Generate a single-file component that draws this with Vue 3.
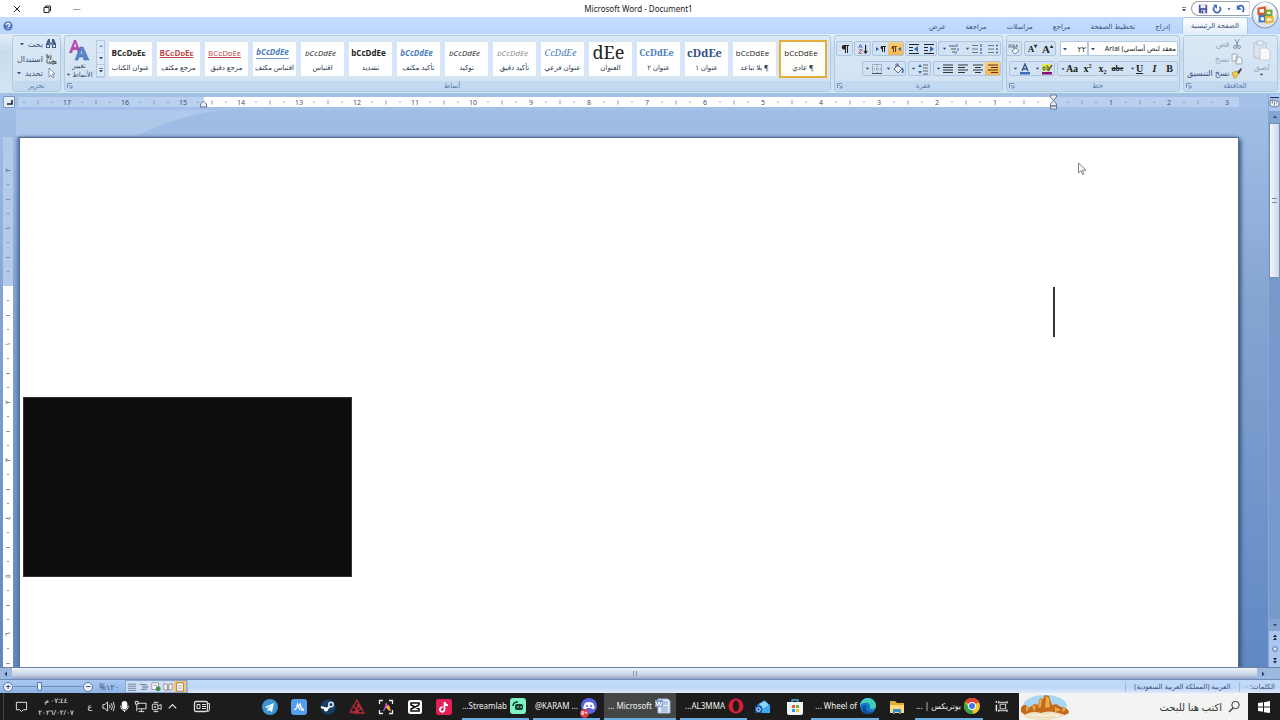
<script setup>
import { h } from 'vue'

const icons = {
  close: ['0 0 12 12', '<path d="M3 3l6 6M9 3l-6 6" stroke="#222" fill="none"/>'],
  restore: ['0 0 12 12', '<path d="M3 4.500h5v5H3zM4.500 4V3H9.500v5H8.500" stroke="#222" fill="none"/>'],
  minimize: ['0 0 12 12', '<path d="M2.500 6.500h7" stroke="#999" fill="none"/>'],
  save: ['0 0 12 12', '<path d="M1 1h10v10H2l-1-1z" fill="#4a4fa8"/><path d="M3 1h6v4H3z" fill="#e8ecfa"/><path d="M4 7h5v4H4z" fill="#c5cbe8"/><path d="M5 8h1v3H5z" fill="#223"/>'],
  redo: ['0 0 12 12', '<path d="M3 3.500a4 4 0 1 0 6 0" fill="none" stroke="#3d67b8" stroke-width="2"/><path d="M1 1h5v5z" fill="#3d67b8"/>'],
  undo: ['0 0 12 12', '<path d="M3 3c4-3 8 1 5 7" fill="none" stroke="#3d67b8" stroke-width="2"/><path d="M1 1v6h6z" fill="#3d67b8"/>'],
  down: ['0 0 8 8', '<path d="M2 3h4L4 5.500z" fill="#334a78"/>'],
  up: ['0 0 8 8', '<path d="M2 5h4L4 2.500z" fill="#334a78"/>'],
  left: ['0 0 8 8', '<path d="M5 1.500v5L2.500 4z" fill="#243c66"/>'],
  right: ['0 0 8 8', '<path d="M3 1.500v5L5.500 4z" fill="#243c66"/>'],
  more: ['0 0 8 8', '<path d="M2 2.500h4M2.500 4.500h3L4 6z" fill="#334" stroke="#334" stroke-width=".6"/>'],
  help: ['0 0 10 10', '<circle cx="5" cy="5" r="4.500" fill="#3c64b4"/><circle cx="5" cy="5" r="3.700" fill="#5b80c8"/><path d="M3.400 4q0-1.700 1.700-1.700T6.700 4Q6.700 5 5 5.800M5 7v1" stroke="#fff" stroke-width="1.200" fill="none"/>'],
  office: ['0 0 26 26', '<circle cx="13" cy="13" r="12" fill="#dde3ec" stroke="#8b98ae"/><circle cx="13" cy="11" r="10" fill="#f7f8fb"/><path d="M7 7l6-1v6H7z" fill="none" stroke="#e0562a" stroke-width="2"/><path d="M14 9h5v4h-5z" fill="none" stroke="#74aa3c" stroke-width="2"/><path d="M8 14h5v5H8z" fill="none" stroke="#3f78c0" stroke-width="2"/><path d="M14 15h6v4l-6 1z" fill="none" stroke="#eeb52c" stroke-width="2"/>'],
  find: ['0 0 12 12', '<path d="M1 10V6l2-5h2v9zM7 10V1h2l2 5v4z" fill="#415c8a"/><path d="M4 4h4v3H4z" fill="#6c86b0"/><path d="M2 7h2v2H2zM8 7h2v2H8z" fill="#d7e4f6"/>'],
  replace: ['0 0 12 12', '<path d="M2 1v4h2V3H2M6 2v3l-1 2" stroke="#555" fill="none"/><path d="M2 6v4h3M4 8l2 2-2 1" stroke="#4a7a55" fill="none"/><path d="M7 8h2v3H7zM11.500 8.500H10v2h1.500" stroke="#445" fill="none"/>'],
  select: ['0 0 12 12', '<path d="M4 1v9l2-2 2 3 1-1-1.500-3H10z" fill="#fff" stroke="#667c9e" stroke-width=".8"/>'],
  styles: ['0 0 22 22', '<path d="M1 14L6 1h2l5 13h-3L9 11H5l-1 3zM6 8h2.500L7 4z" fill="#b94cae"/><path d="M7 21l5-13h3l5 11 1 2h-5l-1-3h-4l-1 3zM12 15h3l-2-5z" fill="#5788cc" stroke="#3763a5" stroke-width=".5"/>'],
  pilcrow: ['0 0 12 12', '<path d="M10 2H5a2 2 0 0 0 0 4.500h1V10h1V3h1v7h1V3h1z" fill="#222"/>'],
  sort: ['0 0 14 14', '<path d="M2 6l1.500-4h1L6 6M3 4.500h2" stroke="#4966ac" fill="none"/><path d="M2 8h4l-4 4h4" stroke="#b14050" fill="none"/><path d="M10 2v9M8 9l2 3 2-3" stroke="#222" fill="none" stroke-width="1.300"/>'],
  ltr: ['0 0 12 12', '<path d="M1 4v4l3-2z" fill="#345da0"/><path d="M11 3H7a1.500 1.500 0 0 0 0 3v3h1V4h1v5h1V4h1z" fill="#222"/>'],
  rtl: ['0 0 12 12', '<path d="M11 4v4L8 6z" fill="#345da0"/><path d="M7 3H3a1.500 1.500 0 0 0 0 3v3h1V4h1v5h1V4h1z" fill="#6a4210"/>'],
  outdent: ['0 0 12 12', '<path d="M1 1.500h10M1 4.500h4M1 7.500h4M1 10.500h10" stroke="#222"/><path d="M10 3v6L6 6z" fill="#3f68ac"/>'],
  indent: ['0 0 12 12', '<path d="M1 1.500h10M1 4.500h4M1 7.500h4M1 10.500h10" stroke="#222"/><path d="M7 3v6l4-3z" fill="#3f68ac"/>'],
  multi: ['0 0 12 12', '<path d="M1 3h7M3 6h5M4 9h3" stroke="#555"/><path d="M9 1v3M10 5v3M8 8v3" stroke="#3f6cb2"/>'],
  numbered: ['0 0 12 12', '<path d="M1 2.500h6M1 6h6M1 9.500h6" stroke="#777"/><path d="M10 1v3M10 5v3M10 9v2" stroke="#3f6cb2" stroke-width="1.300"/>'],
  bullets: ['0 0 12 12', '<path d="M1 2.500h6M1 6h6M1 9.500h6" stroke="#777"/><path d="M9 2.500h2M9 6h2M9 9.500h2" stroke="#3f6cb2" stroke-width="1.600"/>'],
  borders: ['0 0 12 12', '<path d="M1.500 1.500h9v9h-9zM6 1v10M1 6h10" fill="none" stroke="#7d8798" stroke-dasharray="1 1"/><path d="M1 10.500h10" stroke="#555"/>'],
  bucket: ['0 0 12 12', '<path d="M2 6l4-4 4 4-4 4z" fill="#e9eef8" stroke="#5c6b85"/><path d="M4 4V1h2v3" fill="none" stroke="#5c6b85"/><path d="M10 5q2 3 0 5" stroke="#3d6fc0" fill="none" stroke-width="1.500"/>'],
  spacing: ['0 0 12 12', '<path d="M6 2h5M6 5h5M6 8h5M6 11h5" stroke="#666"/><path d="M1 4l2-3 2 3zM1 8l2 3 2-3z" fill="#3f6cb2"/>'],
  justify: ['0 0 12 12', '<path d="M1 2h10M1 4.500h10M1 7h10M1 9.500h10" stroke="#333" stroke-width="1.200"/>'],
  alignl: ['0 0 12 12', '<path d="M1 2h10M1 4.500h7M1 7h10M1 9.500h7" stroke="#333" stroke-width="1.200"/>'],
  center: ['0 0 12 12', '<path d="M1 2h10M3 4.500h6M1 7h10M3 9.500h6" stroke="#333" stroke-width="1.200"/>'],
  alignr: ['0 0 12 12', '<path d="M1 2h10M4 4.500h7M1 7h10M4 9.500h7" stroke="#5a3508" stroke-width="1.200"/>'],
  clear: ['0 0 12 12', '<path d="M1 5V2h2v3M5 1v4h2V3H5M10 2H8.500v2H10" fill="none" stroke="#667" stroke-width=".8"/><path d="M4 8l4-3 3 3-4 3z" fill="#fff" stroke="#7b88a2"/>'],
  fontcolor: ['0 0 12 12', '<path d="M3 8l3-7 3 7M4 6h4" fill="none" stroke="#34568f" stroke-width="1.400"/><path d="M1 9h10v2.500H1z" fill="#3c6fb5"/>'],
  marker: ['0 0 12 12', '<path d="M1 1h8v7H1z" fill="#e8ee42"/><path d="M2 7V4h2v3zM6 2v5h2V4H6" fill="none" stroke="#444" stroke-width=".8"/><path d="M7 8l4-6" stroke="#6b6034" stroke-width="1.500"/><path d="M1 9h10v2.500H1z" fill="#85107c"/>'],
  scissors: ['0 0 12 12', '<path d="M4 1l3 7M8 1L5 8" stroke="#8794ac" fill="none"/><circle cx="4" cy="9" r="1.500" fill="none" stroke="#8794ac"/><circle cx="8" cy="9" r="1.500" fill="none" stroke="#8794ac"/>'],
  copy: ['0 0 12 12', '<path d="M1 1h5v7H1zM5 4h4l2 2v5H5z" fill="#f0f3f8" stroke="#a3acbc"/>'],
  brush: ['0 0 12 12', '<path d="M1 6l4-2 3 3-3 4H3z" fill="#eecb4c" stroke="#a5882c" stroke-width=".6"/><path d="M6 5l4-4 1 1-3 5z" fill="#4e463c"/>'],
  paste: ['0 0 20 22', '<path d="M2 3h12v15H2z" fill="#dce5ef" stroke="#b5c1d0"/><path d="M5 1h6v4H5z" fill="#edf1f6" stroke="#b5c1d0"/><path d="M8 8h7l3 3v9H8z" fill="#f8fafd" stroke="#c2cbd8"/>'],
  launcher: ['0 0 8 8', '<path d="M1.500 6V1.500H6M3 3l3 3M6 3.500V6H3.500" stroke="#6e89b2" fill="none" stroke-width=".9"/>'],
  vprint: ['0 0 12 12', '<path d="M2 1h8v10H2z" fill="#fff" stroke="#8b6f3a"/><path d="M4 4h4M4 6h4M4 8h4" stroke="#888" stroke-width=".7"/>'],
  vread: ['0 0 12 12', '<path d="M1 2l4 1v7L1 9zM11 2L7 3v7l4-1z" fill="#fff" stroke="#7a7f8c"/><path d="M6 3v7" stroke="#c58a3d"/>'],
  vweb: ['0 0 12 12', '<path d="M1 1h8v8H1z" fill="#fff" stroke="#8792a8"/><path d="M3 4h4" stroke="#888"/><circle cx="8.500" cy="8" r="3" fill="#459055"/>'],
  voutline: ['0 0 12 12', '<path d="M1 3h8M4 5h7M4 7h7M2 9h7" stroke="#66738b"/>'],
  vdraft: ['0 0 12 12', '<path d="M1 2.500h10M1 5h10M1 7.500h10M1 10h10" stroke="#66738b"/>'],
  notify: ['0 0 14 14', '<path d="M1.500 2.500h11v8H9l-2 2-2-2H1.500z" fill="none" stroke="#eee"/>'],
  speaker: ['0 0 14 14', '<path d="M1 5h2l3-3v10L3 9H1z" fill="none" stroke="#eee"/><path d="M8 5q1.500 2 0 4M10 3.500q2.500 3.500 0 7M12 2q3 5 0 10" fill="none" stroke="#eee"/>'],
  mic: ['0 0 14 14', '<rect x="4" y="1" width="6" height="9" rx="3" fill="#fff"/><path d="M3 6q0 5 4 5t4-5M7 11v2" fill="none" stroke="#fff"/>'],
  network: ['0 0 14 14', '<path d="M4 3.500h9v6H4M8 10v2M5 12.500h6M1.500 1.500h3v3h-3zM3 5v7" fill="none" stroke="#eee"/>'],
  device: ['0 0 14 14', '<rect x="2.500" y="4.500" width="6" height="6" rx="1" fill="none" stroke="#eee"/><path d="M9 6l3-1v5L9 9M4 2.500h5M4 12.500h5" fill="none" stroke="#eee"/><circle cx="5.500" cy="7.500" r="1" fill="#eee"/>'],
  chevron: ['0 0 14 14', '<path d="M3 9l4-4 4 4" fill="none" stroke="#eee" stroke-width="1.200"/>'],
  news: ['0 0 18 14', '<rect x="1.500" y="2" width="13" height="10" rx="1.500" fill="none" stroke="#ddd" stroke-width="1.300"/><path d="M15 4h1.500v6q0 2-2 2M4 5h3v4H4zM9 5h4M9 7h4M9 9h4" fill="none" stroke="#ddd"/>'],
  telegram: ['0 0 16 16', '<circle cx="8" cy="8" r="8" fill="#3b95d5"/><path d="M3 8l9-4-2 9-3-2-1.500 1.500V10L10 6 5 9z" fill="#fff"/>'],
  wave: ['0 0 16 16', '<rect width="16" height="16" rx="3" fill="#559df0"/><path d="M3 11q3-1 3.500-5.500L9 11M8 6.500l1-1.500q1 5 4 6h-3" stroke="#fff" stroke-width="1.300" fill="none"/>'],
  steam: ['0 0 16 16', '<circle cx="8" cy="8" r="7.500" fill="#173e68"/><path d="M1 8l6 2 4-4" stroke="#fff" stroke-width="2" fill="none"/><circle cx="11" cy="5.500" r="3" fill="#dce8f4"/><circle cx="11" cy="5.500" r="1.500" fill="#173e68"/><circle cx="6" cy="10.500" r="2" fill="#fff"/>'],
  redtri: ['0 0 16 16', '<path d="M8 1l2 4-4 8H1zM8 1l7 13H9l-1-4M5 7l5 7H4l8-4-4-5" fill="none" stroke="#b52a35" stroke-width="1.300"/>'],
  capture: ['0 0 16 16', '<path d="M1.500 5V1.500H5M11 1.500h3.500V5M1.500 11v3.500H5M11 14.500h3.500V11" fill="none" stroke="#eee" stroke-width="1.300"/><path d="M4 12q2-1 4-8l1 3-3 5z" fill="#377ce5"/><path d="M8 3l3 5-3 1-2 3z" fill="#dd45bf"/><path d="M8 8l3-2 2 6q-3 0-5-4z" fill="#f5b437"/>'],
  capcut: ['0 0 16 16', '<rect x="1" y="1" width="14" height="14" rx="2.500" fill="#fff"/><path d="M12 6V4H4v2l8 4v2H4v-2l8-4" fill="none" stroke="#111" stroke-width="1.600"/>'],
  tiktok: ['0 0 16 16', '<rect width="16" height="16" rx="2" fill="#e41f58"/><path d="M8.500 3v7.500a2.300 2.300 0 1 1-2-2.300M8.500 3q.5 3 3.500 3.300" fill="none" stroke="#fff" stroke-width="1.800"/>'],
  streamlabs: ['0 0 16 16', '<rect width="16" height="16" rx="3" fill="#7ff2c3"/><path d="M3 8q0-4 5-4" stroke="#123c30" stroke-width="1.500" fill="none"/><rect x="5" y="6" width="8" height="6" rx="2" fill="#123c30"/><path d="M8 8v2M11 8v2" stroke="#7ff2c3"/>'],
  discord: ['0 0 16 16', '<circle cx="8" cy="8" r="8" fill="#5864e8"/><path d="M4 5q4-2 8 0l2 5q-2 2-3 1l-1-1H6l-1 1q-1 1-3-1z" fill="#fff"/><circle cx="6" cy="8" r="1" fill="#5864e8"/><circle cx="10" cy="8" r="1" fill="#5864e8"/>'],
  word: ['0 0 16 16', '<path d="M5 1h8l2 2v12H3V1z" fill="#e7effa" stroke="#9db6da"/><path d="M8 4h5M8 6h5M6 9h7M6 11h7M6 13h7" stroke="#5d87c5" stroke-width=".8"/><path d="M0 2h8v7H0z" fill="#7f9fd2"/><path d="M1 4l1.500 4L4 4l1.500 4L7 4" stroke="#fff" fill="none"/>'],
  opera: ['0 0 16 16', '<ellipse cx="8" cy="8" rx="7.500" ry="7.500" fill="#d91d35"/><ellipse cx="8" cy="8" rx="3.200" ry="5.500" fill="#1b1c1c"/>'],
  outlook: ['0 0 16 16', '<path d="M2 6l7-5 6 5v8H3z" fill="#1d7fda"/><path d="M4 5l6-3 4 4-6 4z" fill="#8bd4fa"/><path d="M7 11l8-5v8H3z" fill="#3faaf0"/><rect y="7" width="7" height="7" rx="1" fill="#1559ad"/><circle cx="3.500" cy="10.500" r="1.800" fill="none" stroke="#fff"/>'],
  store: ['0 0 16 16', '<path d="M5 4V1h6v3" fill="none" stroke="#4bb1e2" stroke-width="1.300"/><path d="M0 3h16v11q0 2-2 2H2q-2 0-2-2z" fill="#f2f5f7"/><path d="M5 6h3v3H5z" fill="#e65b3a"/><path d="M9 6h3v3H9z" fill="#79b940"/><path d="M5 10h3v3H5z" fill="#2a9fe0"/><path d="M9 10h3v3H9z" fill="#f3bd31"/>'],
  edge: ['0 0 16 16', '<circle cx="8" cy="8" r="8" fill="#1976cc"/><path d="M0 8a8 8 0 0 1 16 0q0 3-4 3-3 0-2-3-1-4-5-3-4 0-5 3z" fill="#3ed0b0"/><path d="M2 3a8 8 0 0 1 9-2q-8 0-11 7 0-3 2-5z" fill="#46cbe8"/><path d="M6 7q-2 6 5 7 3 0 4-2-2 4-7 4-6-1-6-6 1-3 4-3z" fill="#0d5193"/>'],
  folder: ['0 0 16 16', '<path d="M1 2h5l2 2h7v10H1z" fill="#e5ad34"/><path d="M1 6h14v8H1z" fill="#ffd978"/><path d="M4 10h8v5h-2v-2H6v2H4z" fill="#378fcd"/>'],
  chrome: ['0 0 16 16', '<circle cx="8" cy="8" r="8" fill="#f4c52c"/><path d="M8 8L1 4a8 8 0 0 1 14 0z" fill="#e24132"/><path d="M8 8l1 8A8 8 0 0 1 1 4l4 6z" fill="#35a24c"/><circle cx="8" cy="8" r="4" fill="#fff"/><circle cx="8" cy="8" r="3" fill="#3b7be8"/>'],
  taskview: ['0 0 14 14', '<path d="M5.500 4.500h6v5h-6zM4 2.500h9M4 11.500h9M13 1v3M13 10v3M4 1v3M4 10v3" fill="none" stroke="#eee"/><path d="M1.500 1v2M1.500 5v7" stroke="#eee" stroke-width="1.500"/>'],
  windows: ['0 0 12 12', '<path d="M0 2l5-.7v4.200H0zM6 1.200L12 0v5.500H6zM0 6.500h5v4.200L0 10zM6 6.500h6V12l-6-.8z" fill="#fff"/>'],
  search: ['0 0 14 14', '<circle cx="8.500" cy="5" r="3.700" fill="none" stroke="#333"/><path d="M6 8l-4 4" stroke="#333" stroke-width="1.200"/>'],
  desert: ['0 0 50 26', '<ellipse cx="26" cy="12" rx="22" ry="11" fill="#a9d7ef"/><path d="M2 18q-1-8 5-7l3 3 5-4 4 1 2-7 3 1 2-4 4 1 3 9 4-1 5 3q8 1 8 6l-8 4H9z" fill="#c26a1c"/><path d="M21 5l2-1-1 9-3 1zM27 2l3 2 1 9-5 1zM7 12l3 3-3 3zM13 11l4 1-2 6zM36 13l6 3-6 2zM44 13l3 3-4 2z" fill="#eca84b"/><path d="M4 22q8-6 18-3 8-4 24 2-6 5-22 5-15 0-20-4z" fill="#f0e1c2"/><path d="M12 22q6-3 14 0 8-3 14 0" fill="none" stroke="#fff8e8"/>'],
  cursor: ['0 0 10 14', '<path d="M1.500 1v10l2.500-2.300 1.700 3.800 1.300-.7-1.600-3.600H9z" fill="#fff" stroke="#666" stroke-width=".8"/>'],
  ruleTab: ['0 0 12 12', '<path d="M.5.500h11v11H.5z" fill="#e4eefb" stroke="#7c9ac8"/><path d="M9 4v4H4" fill="none" stroke="#222" stroke-width="1.600"/>'],
  ball: ['0 0 8 8', '<circle cx="4" cy="4" r="2.300" fill="#dce8f8" stroke="#55729f"/>'],
  rulerview: ['0 0 10 10', '<path d="M1 3h4l4 1v4L5 9 1 8z" fill="#f3f5f8" stroke="#66758c" stroke-width=".8"/><path d="M3 3v3M5 4v4M7 4v2" stroke="#66758c" stroke-width=".8"/><path d="M1 .5h8" stroke="#223a63"/>'],
  dblup: ['0 0 8 8', '<path d="M2 4l2-2.500L6 4zM2 7l2-2.500L6 7z" fill="#222"/>'],
  dbldown: ['0 0 8 8', '<path d="M2 1l2 2.500L6 1zM2 4l2 2.500L6 4z" fill="#222"/>'],
}
const Icon = (p) => h('svg', { viewBox: icons[p.n][0], width: p.w || p.s, height: p.s, 'aria-hidden': 'true', innerHTML: icons[p.n][1] })
Icon.props = ['n', 's', 'w']

const tabs = ['عرض', 'مراجعة', 'مراسلات', 'مراجع', 'تخطيط الصفحة', 'إدراج']
const styleCards = [
  ['BCᴄDᴅEᴇ', 'عنوان الكتاب', 'black bold'],
  ['BCᴄDᴅEᴇ', 'مرجع مكثف', 'red bold under'],
  ['BCᴄDᴅEᴇ', 'مرجع دقيق', 'red under'],
  ['bCcDdEe', 'اقتباس مكثف', 'blue bold italic line'],
  ['bCcDdEe', 'اقتباس', 'black italic'],
  ['bCcDdEe', 'تشديد', 'black bold'],
  ['bCcDdEe', 'تأكيد مكثف', 'blue bold italic'],
  ['bCcDdEe', 'توكيد', 'black italic'],
  ['bCcDdEe', 'تأكيد دقيق', 'gray italic'],
  ['CcDdEe', 'عنوان فرعي', 'blue serif italic mid'],
  ['dEe', 'العنوان', 'black serif title'],
  ['CcDdEe', 'عنوان ٢', 'blue serif bold mid'],
  ['cDdEe', 'عنوان ١', 'navy serif bold large'],
  ['bCcDdEe', '¶ بلا تباعد', 'black'],
  ['bCcDdEe', '¶ عادي', 'black'],
]
const paraRows = [
  [[['pilcrow']], [['sort']], [['ltr'], ['rtl', 0, 1]], [['outdent'], ['indent']], [['multi', 1], ['numbered', 1], ['bullets']]],
  [[['borders', 1], ['bucket', 1]], [['spacing', 1]], [['justify', 1], ['alignl'], ['center'], ['alignr', 0, 1]]],
]
const rulerNumbers = Array.from({ length: 21 }, (_, i) => i - 3)
const rulerX = (n) => 1035 - n * 58
const vNumbers = Array.from({ length: 9 }, (_, i) => i - 2)
const arabic = '٠١٢٣٤٥٦'
const views = ['vdraft', 'voutline', 'vweb', 'vread', 'vprint']
const tray = ['speaker', 'mic', 'network', 'device', 'chevron']
const pinned = ['telegram', 'wave', 'steam', 'redtri', 'capture', 'capcut', 'tiktok']
</script>

<template>
  <div class="window">
    <header class="titlebar">
      <div class="winctl">
        <button aria-label="إغلاق"><Icon n="close" s="12" /></button>
        <button aria-label="استعادة"><Icon n="restore" s="12" /></button>
        <button aria-label="تصغير"><Icon n="minimize" s="12" /></button>
      </div>
      <h1>Microsoft Word - Document1</h1>
      <div class="quick">
        <button aria-label="تخصيص"><Icon n="more" s="8" /></button>
        <div class="pill">
          <button aria-label="حفظ"><Icon n="save" s="10" /></button>
          <button aria-label="إعادة"><Icon n="redo" s="10" /></button>
          <Icon n="down" s="6" />
          <button aria-label="تراجع"><Icon n="undo" s="10" /></button>
        </div>
      </div>
      <button class="office" aria-label="زر أوفيس"><Icon n="office" s="28" /></button>
    </header>

    <nav class="tabs">
      <button class="help" aria-label="تعليمات"><Icon n="help" s="10" /></button>
      <button v-for="t in tabs" :key="t" class="tab" dir="rtl">{{ t }}</button>
      <button class="tab active" dir="rtl">الصفحة الرئيسية</button>
    </nav>

    <section class="ribbon">
      <div class="group editing">
        <div class="body rows">
          <button dir="rtl"><Icon n="find" s="12" />بحث<Icon n="down" s="8" /></button>
          <button dir="rtl"><Icon n="replace" s="12" />استبدال</button>
          <button dir="rtl"><Icon n="select" s="12" />تحديد<Icon n="down" s="8" /></button>
        </div>
        <div class="caption"><span>تحرير</span></div>
      </div>

      <div class="group styles">
        <div class="body gallery">
          <button class="change" dir="rtl"><Icon n="styles" s="22" /><span>تغيير</span><span>الأنماط<Icon n="down" s="7" /></span></button>
          <div class="scroller">
            <button aria-label="أعلى" class="dim"><Icon n="up" s="8" /></button>
            <button aria-label="أسفل"><Icon n="down" s="8" /></button>
            <button aria-label="المزيد"><Icon n="more" s="8" /></button>
          </div>
          <div class="cards">
            <button v-for="(c, i) in styleCards" :key="i" class="card" :class="{ selected: i === 14 }">
              <span class="sample" :class="c[2]"><span>{{ c[0] }}</span></span>
              <span class="name" dir="rtl">{{ c[1] }}</span>
            </button>
          </div>
        </div>
        <div class="caption"><button aria-label="أنماط"><Icon n="launcher" s="8" /></button><span>أنماط</span></div>
      </div>

      <div class="group paragraph">
        <div class="body tools">
          <div v-for="(row, r) in paraRows" :key="r" class="toolrow">
            <div v-for="(set, s) in row" :key="s" class="set">
              <button v-for="b in set" :key="b[0]" :class="{ on: b[2], wide: b[1] }" :aria-label="b[0]">
                <Icon v-if="b[1]" n="down" s="7" /><Icon :n="b[0]" s="12" />
              </button>
            </div>
          </div>
        </div>
        <div class="caption"><button aria-label="فقرة"><Icon n="launcher" s="8" /></button><span>فقرة</span></div>
      </div>

      <div class="group font">
        <div class="body tools">
          <div class="toolrow">
            <div class="set"><button aria-label="مسح التنسيق"><Icon n="clear" s="12" /></button></div>
            <div class="set"><button class="serifb small">A<sup>▾</sup></button><button class="serifb">A<sup>▴</sup></button></div>
            <div class="combos">
              <label class="combo size"><Icon n="down" s="8" /><select aria-label="حجم الخط" dir="rtl"><option>٢٢</option></select></label>
              <label class="combo face"><Icon n="down" s="8" /><select aria-label="الخط" dir="rtl"><option>معقد لنص أساسي) Arial</option></select></label>
            </div>
          </div>
          <div class="toolrow">
            <div class="set">
              <button class="wide" aria-label="لون الخط"><Icon n="down" s="7" /><Icon n="fontcolor" s="12" /></button>
              <button class="wide" aria-label="تمييز"><Icon n="down" s="7" /><Icon n="marker" s="12" /></button>
            </div>
            <div class="set letters">
              <button class="wide"><Icon n="down" s="6" />Aa</button>
              <button>x<sup>2</sup></button>
              <button>x<sub>2</sub></button>
              <button><s>abc</s></button>
              <button class="wide"><Icon n="down" s="7" /><u>U</u></button>
              <button><i>I</i></button>
              <button>B</button>
            </div>
          </div>
        </div>
        <div class="caption"><button aria-label="خط"><Icon n="launcher" s="8" /></button><span>خط</span></div>
      </div>

      <div class="group clipboard">
        <div class="body clip">
          <div class="rows">
            <button dir="rtl" class="off"><Icon n="scissors" s="12" />قص</button>
            <button dir="rtl" class="off"><Icon n="copy" s="12" />نسخ</button>
            <button dir="rtl"><Icon n="brush" s="12" />نسخ التنسيق</button>
          </div>
          <button class="pastebtn off"><Icon n="paste" s="22" w="20" />لصق<Icon n="down" s="7" /></button>
        </div>
        <div class="caption"><button aria-label="الحافظة"><Icon n="launcher" s="8" /></button><span>الحافظة</span></div>
      </div>
    </section>

    <div class="workspace">
      <div class="desk">
        <div class="hruler">
          <button class="tabstop" aria-label="علامة جدولة"><Icon n="ruleTab" s="12" /></button>
          <div class="band">
            <svg width="1221" height="16">
              <rect x="0" y="3" width="1221" height="10" fill="#b9d0ef" />
              <rect x="186" y="3" width="850" height="10" fill="#fff" />
              <g v-for="n in rulerNumbers" :key="n">
                <text v-if="n" :x="rulerX(n)" y="11" text-anchor="middle">{{ Math.abs(n) }}</text>
                <path :d="`M${rulerX(n) - 15} 7.500v1.500M${rulerX(n) - 29} 6.500v4M${rulerX(n) - 43} 7.500v1.500`" stroke="#8391a8" />
              </g>
              <path d="M182.500 13v-3l3-3 3 3v3z" fill="#e9eef5" stroke="#68788f" />
              <path d="M1032.500 1h6v2l-3 3.500-3-3.500zM1032.500 12v-2l3-3.500 3 3.500v2zM1032.500 12h6v3h-6z" fill="#e9eef5" stroke="#68788f" />
            </svg>
          </div>
        </div>
        <div class="canvas">
          <svg class="arc" width="220" height="26"><path d="M0 0h204Q165 5 120 26H0z" fill="#b9d0ef" opacity=".6" /></svg>
          <div class="vruler">
            <svg width="10" height="532">
              <rect width="10" height="149" fill="#b2cbea" />
              <rect y="149" width="10" height="383" fill="#fff" />
              <g v-for="n in vNumbers" :key="n">
                <text v-if="n" :transform="`translate(7 ${149 + n * 58}) rotate(-90)`" text-anchor="middle">{{ arabic[Math.abs(n)] }}</text>
                <path :d="`M4 ${163.5 + n * 58}h2M3 ${178.5 + n * 58}h4M4 ${192.5 + n * 58}h2`" stroke="#8592a5" />
              </g>
            </svg>
          </div>
          <main class="page">
            <div class="blackout"></div>
            <span class="caret"></span>
            <Icon class="pointer" n="cursor" s="14" w="10" />
          </main>
        </div>
      </div>
      <div class="vscroll">
        <button class="rulerbtn" aria-label="المسطرة"><Icon n="rulerview" s="11" /></button>
        <button class="arrow" aria-label="أعلى"><Icon n="up" s="8" /></button>
        <div class="vtrack"><div class="vthumb"><i></i></div></div>
        <button class="arrow" aria-label="أسفل"><Icon n="down" s="8" /></button>
        <button aria-label="السابق"><Icon n="dblup" s="8" /></button>
        <button aria-label="استعراض"><Icon n="ball" s="8" /></button>
        <button aria-label="التالي"><Icon n="dbldown" s="8" /></button>
      </div>
    </div>

    <div class="hscroll">
      <button aria-label="يسار"><Icon n="left" s="8" /></button>
      <div class="hthumb"><i></i></div>
      <button aria-label="يمين"><Icon n="right" s="8" /></button>
    </div>

    <footer class="status">
      <div class="zoombar">
        <button class="round" aria-label="تكبير">+</button>
        <input type="range" aria-label="التكبير" min="0" max="100" value="36" />
        <button class="round" aria-label="تصغير">−</button>
        <span class="pct">%١٢٠</span>
        <div class="views">
          <button v-for="v in views" :key="v" :class="{ on: v === 'vprint' }" :aria-label="v"><Icon :n="v" s="10" /></button>
        </div>
      </div>
      <span class="lang" dir="rtl">العربية (المملكة العربية السعودية)</span>
      <span class="words" dir="rtl">الكلمات: ٠</span>
    </footer>

    <div class="taskbar">
      <button class="notice" aria-label="الإشعارات"><Icon n="notify" s="13" /></button>
      <div class="clock"><span dir="rtl">٠٧:٤٤ م</span><span>٢٠٢٦/٠٢/٠٧</span></div>
      <span class="kbd">ع</span>
      <button v-for="t in tray" :key="t" class="traybtn" :aria-label="t"><Icon :n="t" s="13" /></button>
      <button class="newsbtn" aria-label="الأخبار"><Icon n="news" s="15" w="18" /></button>
      <div class="apps">
        <div class="pins">
          <button v-for="p in pinned" :key="p" class="pin" :aria-label="p"><Icon :n="p" s="16" /></button>
        </div>
        <button class="app"><span>...Streamlab</span><Icon n="streamlabs" s="16" /></button>
        <button class="app"><span>@KARAM ...</span><Icon n="discord" s="16" /><b class="badge">9+</b></button>
        <button class="app current"><span>... Microsoft</span><Icon n="word" s="16" /></button>
        <button class="app"><span>...AL3MMA</span><Icon n="opera" s="16" /></button>
      </div>
      <button class="pin mid" aria-label="Outlook"><Icon n="outlook" s="16" /></button>
      <button class="pin mid" aria-label="Store"><Icon n="store" s="16" /></button>
      <button class="app"><span>... Wheel of</span><Icon n="edge" s="16" /></button>
      <button class="pin big" aria-label="الملفات"><Icon n="folder" s="16" /></button>
      <button class="app"><span dir="rtl">بوتريكس | ...</span><Icon n="chrome" s="16" /></button>
      <button class="pin big" aria-label="عرض المهام"><Icon n="taskview" s="13" /></button>
      <label class="search">
        <Icon n="desert" s="26" w="50" />
        <input type="text" dir="rtl" placeholder="اكتب هنا للبحث" aria-label="بحث" />
        <Icon n="search" s="14" />
      </label>
      <button class="start" aria-label="ابدأ"><Icon n="windows" s="12" /></button>
    </div>
  </div>
</template>

<style>
body { margin: 0; overflow: hidden; }
</style>

<style scoped>
* { box-sizing: border-box; }
.window { display: flex; flex-direction: column; height: 100vh; font-family: "Noto Sans", "DejaVu Sans", sans-serif; font-size: 7px; line-height: 10px; color: #3a4f7c; background: #a3bfe6; white-space: nowrap; }
button { border: 0; padding: 0; background: none; font: inherit; color: inherit; display: flex; align-items: center; justify-content: center; }
svg { display: block; flex: none; }
.titlebar { position: relative; display: flex; align-items: center; justify-content: space-between; height: 17px; flex: none; background: #fff; }
.winctl { display: flex; gap: 18px; padding-left: 11px; flex: 1; }
.titlebar h1 { margin: 0; padding-left: 16px; font-size: 8px; font-weight: 400; color: #222; }
.quick { display: flex; flex: 1; justify-content: flex-end; align-items: center; gap: 3px; padding-right: 14px; margin-right: 16px; }
.pill { display: flex; align-items: center; gap: 4px; height: 15px; padding: 0 3px 0 6px; border: 1px solid #9a9fab; border-right-color: #ddd; border-radius: 8px 0 0 8px; }
.office { position: absolute; right: 1px; top: 1px; z-index: 2; }
.tabs { display: flex; align-items: stretch; height: 17px; flex: none; padding-right: 32px; background: linear-gradient(#c3dcff, #bcd6fb); font-size: 7px; }
.help { margin: 0 auto 0 3px; }
.tab { padding: 2px 10px 0; }
.tab.active { background: linear-gradient(#fff, #e3edf8); border: 1px solid #a9c5ea; border-bottom: 0; border-radius: 3px 3px 0 0; padding: 0 8px; margin-left: 2px; }
.ribbon { display: flex; flex: none; height: 60px; gap: 3px; padding: 1px 2px 1px 12px; background: linear-gradient(#e3edf8, #c9dcef 30%, #d2e5f5); border-bottom: 1px solid #9fc5d8; }
.group { display: flex; flex-direction: column; border: 1px solid #b0cae2; border-radius: 3px; background: linear-gradient(#dbe8f6, #d0e1f2); min-width: 0; overflow: hidden; }
.body { flex: 1; min-height: 0; }
.caption { display: flex; height: 10px; background: #c3d9ef; color: #5575a8; font-size: 7px; align-items: center; }
.caption span { flex: 1; text-align: center; }
.caption button { width: 8px; margin-left: 1px; }
.editing { width: 49px; }
.styles { flex: 1; }
.paragraph { width: 169px; }
.font { width: 174px; }
.clipboard { width: 95px; }
.rows { display: flex; flex-direction: column; justify-content: space-evenly; font-size: 8px; }
.rows button { justify-content: flex-start; gap: 2px; padding: 0 3px; height: 14px; }
.off { color: #98a5b8; }
.gallery { display: flex; align-items: center; gap: 3px; }
.change { flex-direction: column; width: 30px; line-height: 9px; }
.change span { display: flex; align-items: center; }
.scroller { display: flex; flex-direction: column; width: 9px; height: 38px; margin-left: auto; border: 1px solid #b3cae4; background: #dce9f8; }
.scroller button { flex: 1; border-bottom: 1px solid #b3cae4; }
.dim { opacity: .5; }
.cards { display: flex; gap: 3px; padding-right: 3px; background: #d6e6f7; }
.card { flex-direction: column; justify-content: flex-end; width: 45px; height: 38px; padding: 1px 1px 3px; background: #fff; border: 1px solid #d6e6f7; border-width: 2px 1px; color: #26344f; }
.card.selected { width: 48px; border: 2px solid #e3ae3e; margin-left: -1px; background: #fffdf7; }
.sample { display: flex; justify-content: center; align-items: center; width: 100%; height: 20px; line-height: 12px; font-size: 8px; font-family: "Open Sans", sans-serif; padding-right: 4px; }
.name { font-size: 7px; line-height: 10px; }
.black { color: #222; }
.red { color: #bf4a4a; }
.blue { color: #4a7ebb; }
.navy { color: #2f4f81; }
.gray { color: #888; }
.bold { font-weight: 700; }
.italic { font-style: italic; }
.under span { text-decoration: underline; }
.line span { border-bottom: 1px solid #7da3d0; }
.serif { font-family: "Noto Serif", "DejaVu Serif", serif; }
.mid { font-size: 9px; }
.large { font-size: 11px; }
.title { font-size: 18px; line-height: 18px; align-items: flex-start; }
.tools { display: flex; flex-direction: column; justify-content: space-evenly; }
.toolrow { display: flex; justify-content: flex-end; gap: 2px; padding: 0 1px; }
.set { display: flex; border: 1px solid #aec4e0; border-radius: 2px; background: #d2e2f5; height: 15px; }
.set button { width: 15px; color: #222; }
.set button.wide { width: 22px; }
.set button.on { background: linear-gradient(#f9cf83, #f6b650); }
.paragraph .toolrow:first-child { gap: 1px; }
.paragraph .toolrow:first-child .wide { width: 23px; }
.paragraph .toolrow:last-child .wide { width: 21px; }
.serifb, .letters { font-family: "Liberation Serif", serif; font-weight: 700; font-size: 11px; }
.serifb.small { font-size: 9px; }
.serifb sup { font-size: 6px; margin-bottom: 5px; }
.letters { font-size: 10px; }
.letters sup, .letters sub { font-size: 6px; line-height: 6px; }
.letters sup { margin-bottom: 5px; }
.letters sub { margin-top: 6px; }
.letters s { font-size: 8px; }
.combos { display: flex; margin-left: 2px; }
.combo { display: flex; align-items: center; height: 15px; background: #fff; border: 1px solid #b5c9e2; }
.combo select { appearance: none; border: 0; padding: 0 1px; background: none; font: inherit; font-size: 7px; color: #222; flex: 1; min-width: 0; }
.size { width: 28px; }
.size select { font-size: 8px; }
.face { width: 90px; }
.clip { display: flex; justify-content: flex-end; }
.pastebtn { flex-direction: column; width: 32px; line-height: 9px; font-size: 8px; }
.workspace { display: flex; flex: 1; min-height: 0; }
.desk { flex: 1; display: flex; flex-direction: column; min-width: 0; background: linear-gradient(#a2bfe7 0, #9cbae2 50px, #86a6d2 200px, #6088c3 100%); }
.hruler { display: flex; align-items: center; height: 16px; flex: none; padding-right: 29px; background: #a4c0e8; }
.tabstop { width: 18px; }
.band { flex: 1; overflow: hidden; display: flex; justify-content: flex-end; }
.band text, .vruler text { font-size: 7px; fill: #40516d; }
.canvas { flex: 1; position: relative; display: flex; padding: 27px 29px 0 3px; min-height: 0; overflow: hidden; }
.arc { position: absolute; left: 16px; top: 0; }
.vruler { width: 11px; }
.page { position: relative; flex: 1; margin-left: 5px; background: #fff; border: 1px solid #5d6f91; border-bottom: 0; box-shadow: 2px 2px 4px #35527f, -2px 0 3px #587fb4; }
.blackout { position: absolute; left: 3px; top: 259px; width: 27%; height: 180px; background: #0d0d0d; border: 1px solid #333; }
.caret { position: absolute; right: 183px; top: 149px; width: 2px; height: 50px; background: #333; }
.pointer { position: absolute; right: 151px; top: 24px; }
.vscroll { display: flex; flex-direction: column; width: 12px; border-left: 1px solid #86a7d5; background: #a9c7f0; }
.vscroll button { height: 12px; flex: none; }
.vscroll .rulerbtn { height: 17px; }
.vscroll .arrow { background: #84a4d3; }
.vtrack { flex: 1; background: #7899cb; }
.vthumb { height: 155px; background: linear-gradient(90deg, #f2f7fc, #cbd9e9); border: 1px solid #7690b3; display: flex; align-items: center; justify-content: center; }
.vthumb i { width: 5px; height: 5px; border: 1px solid #7c8fa8; border-width: 1px 0; }
.hscroll { display: flex; flex: none; height: 12px; background: #9db9df; border-top: 1px solid #6981a8; }
.hscroll button { width: 12px; }
.hthumb { flex: 1; background: linear-gradient(#edf3f8, #c5d1e4 65%, #8d9fc4); display: flex; justify-content: center; align-items: center; }
.hthumb i { width: 4px; height: 5px; border: 1px solid #8793a5; border-width: 0 1px; }
.hscroll button:last-child { margin-right: 11px; }
.status { display: flex; flex: none; align-items: center; height: 14px; background: linear-gradient(#c1dafb, #bed6f7 60%, #dceafc); border-top: 1px solid #6d8fbd; }
.zoombar { display: flex; align-items: center; width: 188px; height: 13px; padding-left: 3px; margin-right: auto; background: linear-gradient(#a9c9f4, #8fb3e4); }
.round { width: 10px; height: 10px; border: 1px solid #6079a4; border-radius: 5px; background: #edf4fd; font-size: 9px; font-weight: 700; line-height: 8px; }
.zoombar input { appearance: none; width: 68px; height: 10px; margin: 0 1px; background: linear-gradient(#6f8db8, #6f8db8) center / 100% 1px no-repeat; }
.zoombar input::-webkit-slider-thumb { appearance: none; width: 5px; height: 9px; background: #e8f0fb; border: 1px solid #6079a4; border-radius: 1px 1px 3px 3px; }
.pct { width: 32px; text-align: center; font-size: 8px; }
.views { display: flex; border: 1px solid #86a5d1; background: #cfe0f6; }
.views button { width: 12px; height: 11px; }
.views .on { background: #f8c46c; }
.lang { padding: 0 8px; border-left: 1px solid #9cb9df; border-right: 1px solid #9cb9df; }
.words { padding: 0 5px; }
.taskbar { display: flex; flex: none; align-items: stretch; height: 27px; background: #1b1c1b; color: #f2f2f2; font-size: 8px; }
.notice { width: 36px; margin-left: 3px; border-left: 1px solid #444; }
.clock { display: flex; flex-direction: column; align-items: center; justify-content: center; width: 34px; margin-right: 7px; line-height: 12px; font-size: 7px; }
.kbd { width: 20px; text-align: center; line-height: 26px; }
.traybtn { width: 16px; }
.newsbtn { width: 44px; }
.apps { display: flex; flex: 1; justify-content: flex-end; gap: 4px; }
.pins { display: flex; }
.pin { width: 29px; }
.pin.mid { width: 32px; }
.pin.big { width: 36px; }
.app { position: relative; width: 68px; gap: 2px; justify-content: flex-end; padding: 1px 3px 0 0; border-bottom: 2px solid #69aee2; }
.apps .app { width: 67px; }
.app svg { margin-left: 1px; }
.app span { flex: 1; text-align: right; }
.apps .current { width: 72px; padding-right: 5px; background: #454746; }
.badge { position: absolute; right: 11px; bottom: 0; min-width: 9px; height: 9px; border-radius: 5px; background: #da3b48; font-size: 6px; line-height: 9px; }
.search { display: flex; align-items: center; width: 229px; background: #f3f3f3; padding-right: 7px; }
.search input { flex: 1; min-width: 0; border: 0; padding: 0 5px; background: none; font: inherit; font-size: 10px; }
.search input::placeholder { color: #333; opacity: 1; }
.start { width: 32px; }
</style>
